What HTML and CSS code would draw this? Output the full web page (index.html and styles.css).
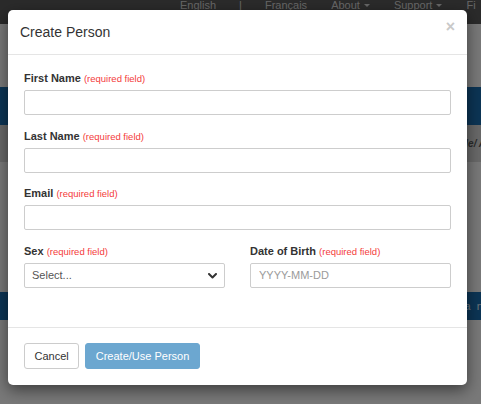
FILE: index.html
```html
<!DOCTYPE html>
<html lang="en">
<head>
<meta charset="utf-8">
<title>Create Person</title>
<link rel="stylesheet" href="styles.css">
</head>
<body>
<div class="page">
  <nav class="topnav">
    <a class="nav-link">English</a>
    <span class="nav-sep">|</span>
    <a class="nav-link">Français</a>
    <a class="nav-link">About <span class="caret"></span></a>
    <a class="nav-link">Support <span class="caret"></span></a>
    <a class="nav-link">Fi</a>
  </nav>
  <div class="hero"></div>
  <div class="crumb"><span class="crumb-text">Role/ A</span></div>
  <div class="content"></div>
  <div class="band"><span class="band-text">Create a n</span></div>
</div>

<div class="backdrop"></div>

<div class="modal">
  <div class="modal-header">
    <h4 class="modal-title">Create Person</h4>
    <button class="close" type="button">×</button>
  </div>
  <div class="modal-body">
    <div class="field">
      <label class="label">First Name <span class="req">(required field)</span></label>
      <input class="control" type="text">
    </div>
    <div class="field">
      <label class="label">Last Name <span class="req">(required field)</span></label>
      <input class="control" type="text">
    </div>
    <div class="field">
      <label class="label">Email <span class="req">(required field)</span></label>
      <input class="control" type="text">
    </div>
    <div class="row">
      <div class="field">
        <label class="label">Sex <span class="req">(required field)</span></label>
        <div class="select-wrap">
          <select class="control select">
            <option>Select...</option>
          </select>
          <svg class="chevron" width="9" height="6" viewBox="0 0 9 6"><path d="M1 1 L4.5 4.5 L8 1" fill="none" stroke="#333" stroke-width="2" stroke-linecap="round" stroke-linejoin="round"/></svg>
        </div>
      </div>
      <div class="field">
        <label class="label">Date of Birth <span class="req">(required field)</span></label>
        <input class="control" type="text" placeholder="YYYY-MM-DD">
      </div>
    </div>
  </div>
  <div class="modal-footer">
    <button class="btn btn-default" type="button">Cancel</button>
    <button class="btn btn-primary" type="button">Create/Use Person</button>
  </div>
</div>
</body>
</html>
```

FILE: styles.css
```css
html, body {
  margin: 0;
  padding: 0;
}

body {
  font-family: "Liberation Sans", Arial, Helvetica, sans-serif;
  color: #333;
  width: 481px;
  height: 404px;
  overflow: hidden;
  position: relative;
}

/* ---------- background page ---------- */
.page {
  background: #f3f3f3;
  height: 404px;
  overflow: hidden;
}

.topnav {
  height: 24px;
  background: #565656;
  display: flex;
  align-items: flex-start;
  gap: 24px;
  padding-left: 180px;
  color: #cfcfcf;
  font-size: 11px;
  line-height: 10px;
  white-space: nowrap;
  overflow: hidden;
}

.nav-link {
  display: inline-flex;
  align-items: center;
  gap: 4px;
}

.nav-sep {
  margin: 0 -1px;
}

.caret {
  display: inline-block;
  width: 0;
  height: 0;
  border-top: 3px solid #cfcfcf;
  border-left: 3px solid transparent;
  border-right: 3px solid transparent;
  margin-top: 1px;
}

.hero {
  margin-top: 63px;
  height: 38px;
  background: #186aab;
}

.crumb {
  height: 37px;
  background: #d2d2d2;
  padding-left: 452px;
  display: flex;
  align-items: center;
  white-space: nowrap;
  font-size: 10px;
  font-weight: bold;
  font-style: italic;
  color: #555;
}

.content {
  height: 130px;
}

.band {
  height: 28px;
  background: #186aab;
  padding-left: 418px;
  display: flex;
  align-items: center;
  white-space: nowrap;
  font-size: 11px;
  letter-spacing: 1.5px;
  color: #d8e4ee;
}

.backdrop {
  position: absolute;
  inset: 0;
  background: rgba(0, 0, 0, 0.5);
}

/* ---------- modal ---------- */
.modal {
  position: absolute;
  top: 10px;
  left: 8px;
  width: 459px;
  background: #fff;
  border-radius: 5px;
  box-shadow: 0 5px 15px rgba(0, 0, 0, 0.5);
}

.modal-header {
  height: 44px;
  border-bottom: 1px solid #e5e5e5;
  display: flex;
  justify-content: space-between;
  align-items: flex-start;
  padding: 0 12px;
}

.modal-title {
  margin: 0;
  font-size: 14px;
  font-weight: normal;
  line-height: 44px;
  color: #333;
}

.close {
  margin-top: 9px;
  padding: 0;
  border: 0;
  background: none;
  font-family: "Liberation Sans", Arial, sans-serif;
  font-size: 16px;
  font-weight: bold;
  line-height: 16px;
  color: #c9c9c9;
}

.modal-body {
  padding: 15px 16px 27px;
}

.field {
  margin-bottom: 12.5px;
}

.label {
  display: block;
  height: 16px;
  font-size: 11px;
  font-weight: bold;
  line-height: 16px;
  margin-bottom: 4px;
  color: #333;
  white-space: nowrap;
}

.req {
  font-size: 9.5px;
  line-height: 1;
  font-weight: normal;
  color: #f43b3b;
}

.control {
  display: block;
  width: 100%;
  height: 25px;
  box-sizing: border-box;
  margin: 0;
  border: 1px solid #cdcdcd;
  border-radius: 2px;
  padding: 0 8px;
  background: #fff;
  font-family: "Liberation Sans", Arial, sans-serif;
  font-size: 11px;
  color: #555;
  outline: none;
}

.control::placeholder {
  color: #9a9a9a;
}

.row {
  display: grid;
  grid-template-columns: 1fr 1fr;
  column-gap: 25px;
}

.select-wrap {
  position: relative;
}

.select {
  appearance: none;
  -webkit-appearance: none;
  padding-left: 7px;
}

.chevron {
  position: absolute;
  right: 8px;
  top: 10px;
}

.modal-footer {
  border-top: 1px solid #e5e5e5;
  padding: 15px 16px 16px;
  display: flex;
  gap: 6px;
}

.btn {
  height: 26px;
  box-sizing: border-box;
  padding: 0 9.5px;
  border-radius: 3px;
  font-family: "Liberation Sans", Arial, sans-serif;
  font-size: 11px;
  line-height: 24px;
}

.btn-default {
  background: #fff;
  border: 1px solid #cccccc;
  color: #333;
}

.btn-primary {
  background: #6ca7d0;
  border: 1px solid #6ca7d0;
  color: #fff;
}
```
